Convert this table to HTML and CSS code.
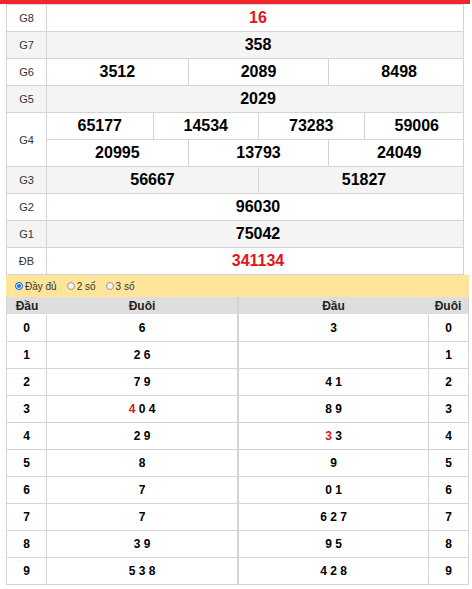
FILE: index.html
```html
<!DOCTYPE html>
<html lang="vi">
<head>
<meta charset="utf-8">
<title>KQXS</title>
<link rel="stylesheet" href="styles.css">
</head>
<body>
<div class="page">
  <div class="topbar"></div>
  <div class="content">
    <div class="prizes">
      <div class="prow"><div class="plabel">G8</div><div class="pval red">16</div></div>
      <div class="prow alt"><div class="plabel">G7</div><div class="pval">358</div></div>
      <div class="prow"><div class="plabel">G6</div><div class="pval cols3"><span>3512</span><span>2089</span><span>8498</span></div></div>
      <div class="prow alt"><div class="plabel">G5</div><div class="pval">2029</div></div>
      <div class="prow g4">
        <div class="plabel">G4</div>
        <div class="pstack">
          <div class="pval cols4 sub"><span>65177</span><span>14534</span><span>73283</span><span>59006</span></div>
          <div class="pval cols3"><span>20995</span><span>13793</span><span>24049</span></div>
        </div>
      </div>
      <div class="prow alt"><div class="plabel">G3</div><div class="pval cols2"><span>56667</span><span>51827</span></div></div>
      <div class="prow"><div class="plabel">G2</div><div class="pval">96030</div></div>
      <div class="prow alt"><div class="plabel">G1</div><div class="pval">75042</div></div>
      <div class="prow"><div class="plabel">ĐB</div><div class="pval red">341134</div></div>
    </div>
    <div class="options">
      <label class="opt"><span class="radio checked"></span>Đầy đủ</label>
      <label class="opt"><span class="radio"></span>2 số</label>
      <label class="opt"><span class="radio"></span>3 số</label>
    </div>
    <div class="loto">
      <div class="ltable lleft">
        <div class="lhead"><span>Đầu</span><span>Đuôi</span></div>
        <div class="lrow"><span class="k">0</span><span class="v">6</span></div>
        <div class="lrow"><span class="k">1</span><span class="v">2 6</span></div>
        <div class="lrow"><span class="k">2</span><span class="v">7 9</span></div>
        <div class="lrow"><span class="k">3</span><span class="v"><em class="hl">4</em> 0 4</span></div>
        <div class="lrow"><span class="k">4</span><span class="v">2 9</span></div>
        <div class="lrow"><span class="k">5</span><span class="v">8</span></div>
        <div class="lrow"><span class="k">6</span><span class="v">7</span></div>
        <div class="lrow"><span class="k">7</span><span class="v">7</span></div>
        <div class="lrow"><span class="k">8</span><span class="v">3 9</span></div>
        <div class="lrow"><span class="k">9</span><span class="v">5 3 8</span></div>
      </div>
      <div class="ltable lright">
        <div class="lhead"><span>Đầu</span><span>Đuôi</span></div>
        <div class="lrow"><span class="v">3</span><span class="k">0</span></div>
        <div class="lrow"><span class="v"></span><span class="k">1</span></div>
        <div class="lrow"><span class="v">4 1</span><span class="k">2</span></div>
        <div class="lrow"><span class="v">8 9</span><span class="k">3</span></div>
        <div class="lrow"><span class="v"><em class="hl">3</em> 3</span><span class="k">4</span></div>
        <div class="lrow"><span class="v">9</span><span class="k">5</span></div>
        <div class="lrow"><span class="v">0 1</span><span class="k">6</span></div>
        <div class="lrow"><span class="v">6 2 7</span><span class="k">7</span></div>
        <div class="lrow"><span class="v">9 5</span><span class="k">8</span></div>
        <div class="lrow"><span class="v">4 2 8</span><span class="k">9</span></div>
      </div>
    </div>
  </div>
</div>
</body>
</html>
```
FILE: styles.css
```css
* { box-sizing: border-box; }
html, body { margin: 0; padding: 0; background: #fff; }
body { font-family: "Liberation Sans", Arial, sans-serif; color: #000; }

.page { width: 470px; }
.topbar { height: 4px; background: #ef262c; }
.content { margin-left: 6px; width: 463px; }

.prizes {
  width: 458px;
  border: 1px solid #d4d4d4;
  border-bottom: none;
  overflow: hidden;
}
.prow {
  display: grid;
  grid-template-columns: 40px 422px;
  height: 27px;
  border-bottom: 1px solid #d4d4d4;
  background: #fff;
}
.prow.alt { background: #f4f4f4; }
.prow.g4 { height: 54px; }
.plabel {
  border-right: 1px solid #d4d4d4;
  display: flex;
  align-items: center;
  justify-content: center;
  font-size: 11px;
  color: #333;
}
.pval {
  display: flex;
  align-items: center;
  justify-content: center;
  font-size: 16px;
  font-weight: bold;
  height: 26px;
}
.pval.red { color: #e3141b; }
.pstack { display: flex; flex-direction: column; }
.pval.sub { height: 27px; border-bottom: 1px solid #d4d4d4; }
.cols2, .cols3, .cols4 { display: grid; }
.cols2 { grid-template-columns: repeat(2, 1fr); }
.cols3 { grid-template-columns: repeat(3, 1fr); }
.cols4 { grid-template-columns: repeat(4, 1fr); }
.cols2 span, .cols3 span, .cols4 span {
  display: flex;
  align-items: center;
  justify-content: center;
  height: 100%;
}
.cols2 span + span, .cols3 span + span, .cols4 span + span { border-left: 1px solid #d4d4d4; }

.options {
  height: 22px;
  background: #ffe599;
  display: flex;
  align-items: center;
  padding-left: 9px;
  gap: 10px;
  font-size: 10px;
  color: #333;
}
.opt { display: flex; align-items: center; gap: 2px; }
.radio {
  width: 8px;
  height: 8px;
  border-radius: 50%;
  border: 1px solid #9a9a9a;
  background: #f2f2f2;
}
.radio.checked {
  border: 1px solid #1a73e8;
  background: #1a73e8;
  box-shadow: inset 0 0 0 1px #fff;
}

.loto { display: flex; }
.ltable { border-left: 1px solid #d4d4d4; border-right: 1px solid #d4d4d4; }
.lleft { width: 232px; }
.lright { width: 231px; }
.lhead {
  height: 18px;
  background: #dedede;
  border-bottom: 1px solid #fff;
  display: grid;
  font-size: 12px;
  font-weight: bold;
  color: #222;
}
.lhead span { display: flex; align-items: center; justify-content: center; }
.lrow {
  display: grid;
  height: 27px;
  border-bottom: 1px solid #d4d4d4;
  font-size: 12px;
  font-weight: bold;
}
.lleft .lhead, .lleft .lrow { grid-template-columns: 40px 1fr; }
.lright .lhead, .lright .lrow { grid-template-columns: 1fr 40px; }
.lrow span { display: flex; align-items: center; justify-content: center; white-space: pre; }
.lleft .lrow .k { border-right: 1px solid #d4d4d4; }
.lright .lrow .k { border-left: 1px solid #d4d4d4; }
.hl { font-style: normal; color: #e3141b; }
```
